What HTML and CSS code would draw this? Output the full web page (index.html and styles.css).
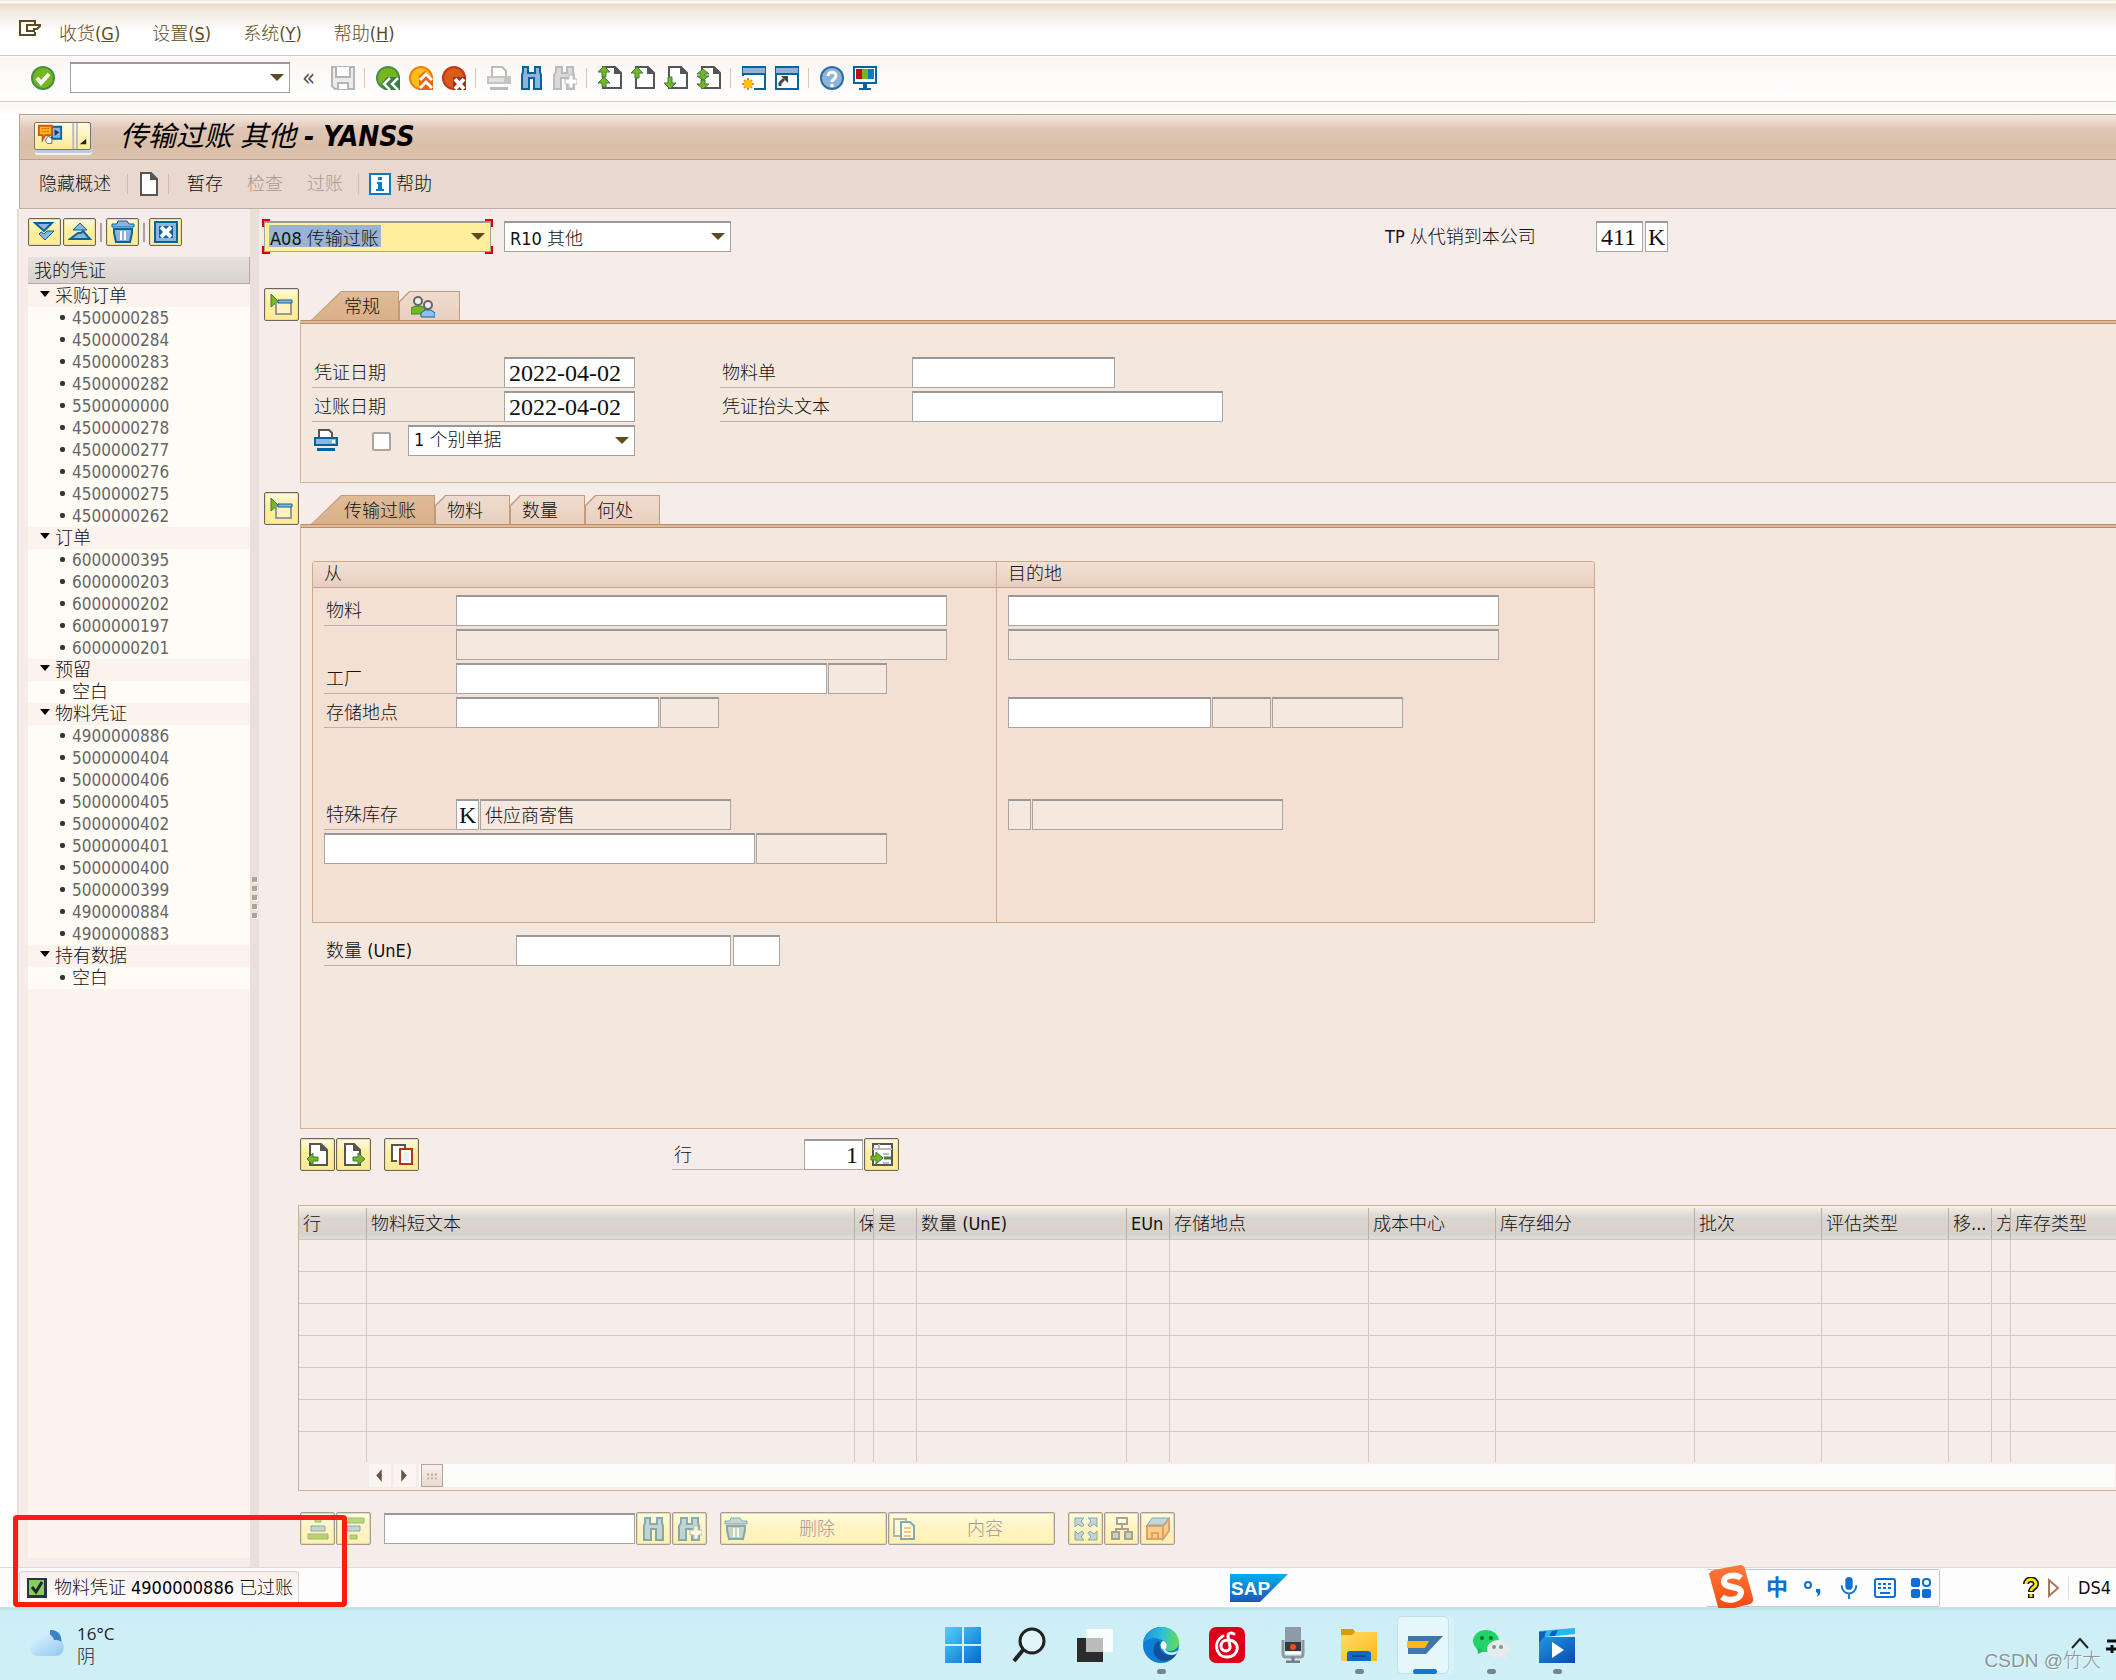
FILE: index.html
```html
<!DOCTYPE html>
<html lang="zh-CN">
<head>
    <meta charset="UTF-8">
    <meta name="viewport" content="width=device-width, initial-scale=1">
    <title>传输过账 其他 - YANSS</title>
    <link rel="stylesheet" href="styles.css">
</head>
<body>
    <!-- icon set -->
    <svg class="defs" aria-hidden="true">
        <defs>
            <linearGradient id="g-sap" x1="0" y1="0" x2="0" y2="1"><stop offset="0" stop-color="#00b0ee"/><stop offset="1" stop-color="#1f56b8"/></linearGradient>
            <linearGradient id="g-win" x1="0" y1="0" x2="1" y2="1"><stop offset="0" stop-color="#4fd0fa"/><stop offset="1" stop-color="#0669cf"/></linearGradient>
            <linearGradient id="g-edge" x1="0" y1="0.3" x2="1" y2="0.4"><stop offset="0" stop-color="#1d8fdc"/><stop offset=".55" stop-color="#2fc0d4"/><stop offset="1" stop-color="#62dd55"/></linearGradient>
            <linearGradient id="g-folder" x1="0" y1="0" x2="1" y2="1"><stop offset="0" stop-color="#ffdd6b"/><stop offset="1" stop-color="#fbb918"/></linearGradient>
            <linearGradient id="g-video" x1="0" y1="0" x2="1" y2="1"><stop offset="0" stop-color="#1d9ae0"/><stop offset="1" stop-color="#0a48b5"/></linearGradient>
            <linearGradient id="g-cloud" x1="0" y1="0" x2="1" y2="1"><stop offset="0" stop-color="#e4f4ff"/><stop offset="1" stop-color="#8cc9f2"/></linearGradient>
            <linearGradient id="g-sogou" x1="0" y1="0" x2="0" y2="1"><stop offset="0" stop-color="#ff7a3c"/><stop offset="1" stop-color="#f2480f"/></linearGradient>
        </defs>
        <symbol id="ok" viewBox="0 0 24 24"><circle cx="12" cy="12" r="11" fill="#76b71f" stroke="#468f46" stroke-width="2"/><path d="M6 12l4 5 8-9" fill="none" stroke="#fff" stroke-width="4"/></symbol>
        <symbol id="save" viewBox="0 0 24 24"><path d="M1 1h22v22H4l-3-3z" fill="#ececec" stroke="#b5b5b5" stroke-width="2"/><path d="M5 1v10h14V1M7 23v-6h10v6" fill="#fff" stroke="#b5b5b5" stroke-width="2"/></symbol>
        <symbol id="back" viewBox="0 0 24 24"><circle cx="12" cy="12" r="11" fill="#76b71f" stroke="#468f46" stroke-width="2"/><path d="M24 11v13H9l-4-6 6-7z" fill="#3c7d46"/><path d="M14 12l-6 6 6 6M22 12l-6 6 6 6" fill="none" stroke="#fff" stroke-width="2.5"/></symbol>
        <symbol id="exit" viewBox="0 0 24 24"><circle cx="12" cy="12" r="11" fill="#fdc010" stroke="#ef7d1a" stroke-width="2"/><path d="M10 24V10l6-5 8 7v12z" fill="#e8641b"/><path d="M11 14l6-6 6 6M11 22l6-6 6 6" fill="none" stroke="#fff" stroke-width="3"/></symbol>
        <symbol id="cancel" viewBox="0 0 24 24"><circle cx="12" cy="12" r="11" fill="#da5a17" stroke="#bb3a1b" stroke-width="2"/><path d="M11 11h13v13H11z" fill="#aa2c1c"/><path d="M13 13l9 10M22 13l-9 10" stroke="#fff" stroke-width="4"/></symbol>
        <symbol id="print-off" viewBox="0 0 24 24"><path d="M5 10V1h10l4 4v5" fill="#fff" stroke="#bbb" stroke-width="2"/><path d="M0 10h24v8H0z" fill="#c4c4c4"/><path d="M2 12h15v4H2z" fill="#e2e2e2"/><path d="M3 21h18v3H3z" fill="#bbb"/></symbol>
        <symbol id="print" viewBox="0 0 24 24"><path d="M5 9V2h10l3 3v4" fill="#fff" stroke="#555" stroke-width="2"/><path d="M0 9h24v9H0z" fill="#06649c"/><path d="M2 11h20v5H2z" fill="#8fb3db"/><path d="M18 12h3v3h-3z" fill="#fff"/><path d="M3 20h18v3H3z" fill="#06649c"/></symbol>
        <symbol id="find" viewBox="0 0 24 24"><path d="M3 1h5v6h7V1h5v5l1 3v14h-7V12H9v11H2V9l1-3z" fill="#8fb3db" stroke="#06649c" stroke-width="2"/></symbol>
        <symbol id="find-off" viewBox="0 0 24 24"><path d="M3 1h6v6h5V1h6v5l1 3v14h-7V12H8v11H1V9l2-3z" fill="#d9d9d9" stroke="#bbb" stroke-width="2"/><path d="M16 9h4v4h4v5h-4v4h-4v-4h-4v-5h4z" fill="#fff" stroke="#bbb"/></symbol>
        <symbol id="find-next" viewBox="0 0 24 24"><path d="M3 1h6v6h5V1h6v5l1 3v14h-7V12H8v11H1V9l2-3z" fill="#8fb3db" stroke="#06649c" stroke-width="2"/><path d="M16 9h4v4h4v5h-4v4h-4v-4h-4v-5h4z" fill="#fff" stroke="#7288aa"/></symbol>
        <symbol id="pg-first" viewBox="0 0 24 24"><path d="M5 1h12l6 6v15H5z" fill="#fff" stroke="#555" stroke-width="2"/><path d="M16 0l8 8h-8z" fill="#555"/><path d="M6 0l6 6H8v5H4V6H0zM6 11l6 6H8v4H4v-4H0z" fill="#76b71f" stroke="#3c7d46"/></symbol>
        <symbol id="pg-up" viewBox="0 0 24 24"><path d="M5 1h12l6 6v15H5z" fill="#fff" stroke="#555" stroke-width="2"/><path d="M16 0l8 8h-8z" fill="#555"/><path d="M6 1l6 6H8v5H4V7H0z" fill="#76b71f" stroke="#3c7d46"/></symbol>
        <symbol id="pg-down" viewBox="0 0 24 24"><path d="M5 1h12l6 6v15H5z" fill="#fff" stroke="#555" stroke-width="2"/><path d="M16 0l8 8h-8z" fill="#555"/><path d="M4 11h4v6h4l-6 6-6-6h4z" fill="#76b71f" stroke="#3c7d46"/></symbol>
        <symbol id="pg-last" viewBox="0 0 24 24"><path d="M5 1h12l6 6v15H5z" fill="#fff" stroke="#555" stroke-width="2"/><path d="M16 0l8 8h-8z" fill="#555"/><path d="M6 3l6 5H8v2h4l-6 4-6-4h4V8H0zM4 14h4v4h4l-6 5-6-5h4z" fill="#76b71f" stroke="#3c7d46"/></symbol>
        <symbol id="session" viewBox="0 0 24 24"><path d="M1 1h22v22H1z" fill="#fff" stroke="#06649c" stroke-width="2"/><path d="M1 2h22v6H1z" fill="#8fb3db"/><path d="M0 8h24" stroke="#06649c" stroke-width="2"/><path d="M0 10h12v14H0z" fill="#fff"/><path d="M6 12v12M0 18h12M2 14l8 8M10 14l-8 8" stroke="#f08c1c" stroke-width="2"/><circle cx="6" cy="18" r="4" fill="#fdc010"/></symbol>
        <symbol id="shortcut" viewBox="0 0 24 24"><path d="M1 1h22v22H1z" fill="#fff" stroke="#06649c" stroke-width="2"/><path d="M1 2h22v6H1z" fill="#8fb3db"/><path d="M0 8h24" stroke="#06649c" stroke-width="2"/><path d="M5 20v-3l4-4" fill="none" stroke="#444" stroke-width="3"/><path d="M6 10h7v7z" fill="#444"/></symbol>
        <symbol id="help" viewBox="0 0 24 24"><circle cx="12" cy="12" r="11" fill="#8fb3db" stroke="#2b6ea5" stroke-width="2"/><path d="M8 10c0-5 8-5 8 0 0 3-4 3-4 6M12 18v3" fill="none" stroke="#fff" stroke-width="3"/></symbol>
        <symbol id="monitor" viewBox="0 0 24 24"><path d="M1 1h22v16H1z" fill="#fff" stroke="#06649c" stroke-width="2"/><path d="M3 3h6v10H3z" fill="#c40d10"/><path d="M9 3h6v10H9z" fill="#76b71f"/><path d="M15 3h6v10h-6z" fill="#0a7cc4"/><path d="M10 17h4v5h4v2H6v-2h4z" fill="#06649c"/></symbol>
        <symbol id="page" viewBox="0 0 18 24"><path d="M1 1h10l6 6v16H1z" fill="#fff" stroke="#555" stroke-width="2"/><path d="M10 0l8 8h-8z" fill="#555"/></symbol>
        <symbol id="info" viewBox="0 0 22 22"><path d="M1 1h20v20H1z" fill="#fff" stroke="#0a7cc4" stroke-width="2"/><path d="M9 4h4v3H9zM8 9h5v7h2v2H7v-2h2v-5H8z" fill="#0a7cc4"/></symbol>
        <symbol id="down2" viewBox="0 0 24 24"><path d="M2 3h17l-8 8z" fill="#8fb3db" stroke="#06649c" stroke-width="2"/><path d="M6 14l6 6 9-9h-7l-3 3-3-2z" fill="#8fb3db" stroke="#06649c"/></symbol>
        <symbol id="up2" viewBox="0 0 24 24"><path d="M12 3l7 7H5z" fill="#8fb3db" stroke="#06649c"/><path d="M2 19l8-6h3l2-2 7 8z" fill="#8fb3db" stroke="#06649c" stroke-width="2"/></symbol>
        <symbol id="trash" viewBox="0 0 24 24"><path d="M7 1h9l2 3h5v3H1V4h5z" fill="#8fb3db" stroke="#06649c"/><path d="M3 9h18v4l-2 9H5L3 13z" fill="#8fb3db" stroke="#06649c" stroke-width="2"/><path d="M10 11v9M14 11v9" stroke="#fff" stroke-width="2"/></symbol>
        <symbol id="close" viewBox="0 0 24 22"><path d="M1 1h22v20H1z" fill="#8fb3db" stroke="#06649c" stroke-width="2"/><path d="M5 5h14v12H5z" fill="#06649c"/><path d="M7 6l10 10M17 6L7 16" stroke="#fff" stroke-width="4"/></symbol>
        <symbol id="expand" viewBox="0 0 24 24"><path d="M1 1v13l7-6z" fill="#76b71f" stroke="#3c7d46"/><path d="M6 9h15v12H6z" fill="#fdf3c0" stroke="#999" stroke-width="2"/><path d="M8 7h14v3H8z" fill="#8fb3db" stroke="#06649c"/></symbol>
        <symbol id="people" viewBox="0 0 24 22"><circle cx="7" cy="5" r="4" fill="#eee" stroke="#666" stroke-width="2"/><path d="M0 18v-6l4-2h6l4 2v6z" fill="#76b71f" stroke="#3c7d46"/><circle cx="17" cy="9" r="4" fill="#eee" stroke="#666" stroke-width="2"/><path d="M10 21v-4l4-3h6l4 3v4z" fill="#8fc0ee" stroke="#06649c"/></symbol>
        <symbol id="doc-prev" viewBox="0 0 24 24"><path d="M4 1h11l6 6v15H4z" fill="#fff" stroke="#555" stroke-width="2"/><path d="M14 0l8 8h-8z" fill="#555"/><path d="M7 10v4h5v4H7v4l-6-6z" fill="#76b71f" stroke="#3c7d46"/></symbol>
        <symbol id="doc-next" viewBox="0 0 24 24"><path d="M3 1h9l6 6v15H3z" fill="#fff" stroke="#555" stroke-width="2"/><path d="M11 0l8 8h-8z" fill="#555"/><path d="M16 10v4h-5v4h5v4l7-6z" fill="#76b71f" stroke="#3c7d46"/></symbol>
        <symbol id="copy" viewBox="0 0 24 24"><path d="M7 18H2V2h13v3" fill="#fff" stroke="#555" stroke-width="2"/><path d="M10 6h12v15H10z" fill="#fff" stroke="#b23418" stroke-width="2"/><path d="M13 9h6v9h-6z" fill="#eee"/></symbol>
        <symbol id="goto" viewBox="0 0 24 24"><path d="M3 1h19v21H3z" fill="#fff" stroke="#555" stroke-width="2"/><path d="M3 6h19M9 1v6M13 11h6M13 20h6" stroke="#bbb" stroke-width="2"/><path d="M14 15h7" stroke="#3c7d46" stroke-width="3"/><path d="M1 13h5v-4l7 6-7 6v-4H1z" fill="#76b71f" stroke="#3c7d46"/></symbol>
        <symbol id="sort-asc" viewBox="0 0 24 24"><path d="M9 1h6v4H9z" fill="#76b71f" stroke="#3c7d46"/><path d="M5 9h14v5H5z" fill="#8fb3db" stroke="#06649c"/><path d="M2 17h20v5H2z" fill="#76b71f" stroke="#3c7d46"/></symbol>
        <symbol id="sort-desc" viewBox="0 0 24 24"><path d="M2 1h20v5H2z" fill="#76b71f" stroke="#3c7d46"/><path d="M5 9h13v5H5z" fill="#8fb3db" stroke="#06649c"/><path d="M8 18h7v4H8z" fill="#76b71f" stroke="#3c7d46"/></symbol>
        <symbol id="content" viewBox="0 0 24 24"><path d="M2 2h12v17H2z" fill="#fff" stroke="#777" stroke-width="2"/><path d="M9 5h9l4 4v13H9z" fill="#fff" stroke="#06649c" stroke-width="2"/><path d="M12 11h7M12 15h7M12 19h7" stroke="#f0a030" stroke-width="2"/></symbol>
        <symbol id="arrows" viewBox="0 0 24 24"><path d="M1 1h9L7 4l3 4-2 2-4-3-3 3zM23 1h-9l3 3-3 4 2 2 4-3 3 3zM1 23h9l-3-3 3-4-2-2-4 3-3-3zM23 23h-9l3-3-3-4 2-2 4 3 3-3z" fill="#8fb3db" stroke="#06649c"/></symbol>
        <symbol id="tree-ic" viewBox="0 0 24 24"><path d="M12 7v5M6 15v-3h12v3" fill="none" stroke="#555" stroke-width="2"/><path d="M7 1h10v6H7z" fill="#fff" stroke="#555" stroke-width="2"/><path d="M2 15h7v7H2zM15 15h7v7h-7z" fill="#8fb3db" stroke="#555" stroke-width="2"/></symbol>
        <symbol id="box" viewBox="0 0 24 24"><path d="M1 9h16v13H1zM17 9l6-7v12l-6 8z" fill="#f9a943" stroke="#c4501c" stroke-width="2"/><path d="M6 1h17l-6 7H1z" fill="#8fb3db" stroke="#06649c"/><path d="M6 22v-6h6v6" fill="none" stroke="#c4501c" stroke-width="2"/></symbol>
    </svg>

    <nav class="menubar">
        <svg class="menu-icon" viewBox="0 0 22 16"><path d="M16 4V1H1v14h15v-3" fill="none" stroke="#5f4b23" stroke-width="2"/><path d="M8 5h14l-4 4h-3v2H8z" fill="#fff" stroke="#5f4b23" stroke-width="2"/></svg>
        <a href="#">收货(<u>G</u>)</a>
        <a href="#">设置(<u>S</u>)</a>
        <a href="#">系统(<u>Y</u>)</a>
        <a href="#">帮助(<u>H</u>)</a>
    </nav>

    <div class="toolbar">
        <button aria-label="确认"><svg><use href="#ok"/></svg></button>
        <span class="select command"><select aria-label="命令"><option></option></select></span>
        <span class="collapse">«</span>
        <button aria-label="保存"><svg><use href="#save"/></svg></button>
        <i class="sep"></i>
        <button aria-label="返回"><svg><use href="#back"/></svg></button>
        <button aria-label="退出"><svg><use href="#exit"/></svg></button>
        <button aria-label="取消"><svg><use href="#cancel"/></svg></button>
        <i class="sep"></i>
        <button aria-label="打印"><svg><use href="#print-off"/></svg></button>
        <button aria-label="查找"><svg><use href="#find"/></svg></button>
        <button aria-label="查找下一个"><svg><use href="#find-off"/></svg></button>
        <i class="sep"></i>
        <button aria-label="第一页"><svg><use href="#pg-first"/></svg></button>
        <button aria-label="上一页"><svg><use href="#pg-up"/></svg></button>
        <button aria-label="下一页"><svg><use href="#pg-down"/></svg></button>
        <button aria-label="最后一页"><svg><use href="#pg-last"/></svg></button>
        <i class="sep"></i>
        <button aria-label="新会话"><svg><use href="#session"/></svg></button>
        <button aria-label="快捷方式"><svg><use href="#shortcut"/></svg></button>
        <i class="sep"></i>
        <button aria-label="帮助"><svg><use href="#help"/></svg></button>
        <button aria-label="布局"><svg><use href="#monitor"/></svg></button>
    </div>

    <div class="window">
        <header class="titlebar">
            <button class="gos" aria-label="对象服务">
                <svg viewBox="0 0 56 28"><path d="M16 4h10v13H16z" fill="#8fb3db" stroke="#06649c" stroke-width="2"/><path d="M19 7l5 3-5 4z" fill="#123f63"/><path d="M2 3h14v10H9l-3 5v-5H2z" fill="#fdb913" stroke="#d8531c" stroke-width="2"/><path d="M5 6h9M5 9h9" stroke="#d8531c" stroke-dasharray="2 1"/><path d="M12 14l4 3v5h-5l-2-3z" fill="#fff" stroke="#666"/><path d="M39 0v28M43 0v28" stroke="#b9b6cf" stroke-width="2"/><path d="M53 17v6h-7z" fill="#222"/></svg>
            </button>
            <h1>传输过账 其他 <b>- YANSS</b></h1>
        </header>

        <div class="appbar">
            <button>隐藏概述</button>
            <i class="sep"></i>
            <button aria-label="新建"><svg class="page"><use href="#page"/></svg></button>
            <i class="sep"></i>
            <button class="cmd">暂存</button>
            <button class="cmd" disabled>检查</button>
            <button class="cmd" disabled>过账</button>
            <i class="sep"></i>
            <button class="with-icon"><svg class="info"><use href="#info"/></svg>帮助</button>
        </div>

        <div class="workspace">
            <aside class="overview">
                <div class="tree-tools">
                    <button class="btn" aria-label="全部展开"><svg><use href="#down2"/></svg></button>
                    <button class="btn" aria-label="全部折叠"><svg><use href="#up2"/></svg></button>
                    <i class="bar"></i>
                    <button class="btn" aria-label="删除"><svg><use href="#trash"/></svg></button>
                    <i class="bar"></i>
                    <button class="btn" aria-label="关闭"><svg><use href="#close"/></svg></button>
                </div>
                <h2>我的凭证</h2>
                <div class="tree">
                    <h3>采购订单</h3>
                    <ul>
                        <li>4500000285</li>
                        <li>4500000284</li>
                        <li>4500000283</li>
                        <li>4500000282</li>
                        <li>5500000000</li>
                        <li>4500000278</li>
                        <li>4500000277</li>
                        <li>4500000276</li>
                        <li>4500000275</li>
                        <li>4500000262</li>
                    </ul>
                    <h3>订单</h3>
                    <ul>
                        <li>6000000395</li>
                        <li>6000000203</li>
                        <li>6000000202</li>
                        <li>6000000197</li>
                        <li>6000000201</li>
                    </ul>
                    <h3>预留</h3>
                    <ul>
                        <li class="empty">空白</li>
                    </ul>
                    <h3>物料凭证</h3>
                    <ul>
                        <li>4900000886</li>
                        <li>5000000404</li>
                        <li>5000000406</li>
                        <li>5000000405</li>
                        <li>5000000402</li>
                        <li>5000000401</li>
                        <li>5000000400</li>
                        <li>5000000399</li>
                        <li>4900000884</li>
                        <li>4900000883</li>
                    </ul>
                    <h3>持有数据</h3>
                    <ul>
                        <li class="empty">空白</li>
                    </ul>
                </div>
            </aside>

            <div class="splitter"><i></i><i></i><i></i><i></i><i></i></div>

            <main class="content">
                <div class="action-row">
                    <span class="select focused"><select aria-label="业务"><option>A08 传输过账</option></select></span>
                    <span class="select"><select aria-label="参考凭证"><option>R10 其他</option></select></span>
                    <label for="mvt">TP 从代销到本公司</label>
                    <input class="field w46" id="mvt" value="411">
                    <input class="field w22" aria-label="特殊库存标识" value="K">
                </div>

                <section class="block">
                    <button class="btn" aria-label="展开抬头"><svg><use href="#expand"/></svg></button>
                    <div class="tabbed">
                        <div class="tabs">
                            <button class="tab active"><span>常规</span></button>
                            <button class="tab" aria-label="合作伙伴"><svg class="people"><use href="#people"/></svg></button>
                        </div>
                        <div class="panel head-panel">
                            <div class="col">
                                <div class="row"><label for="docdate">凭证日期</label><input class="field w131" id="docdate" value="2022-04-02"></div>
                                <div class="row"><label for="pstdate">过账日期</label><input class="field w131" id="pstdate" value="2022-04-02"></div>
                                <div class="row print-row">
                                    <svg class="printer"><use href="#print"/></svg>
                                    <input type="checkbox" aria-label="打印">
                                    <span class="select"><select aria-label="打印方式"><option>1 个别单据</option></select></span>
                                </div>
                            </div>
                            <div>
                                <div class="row"><label for="slip">物料单</label><input class="field w203" id="slip"></div>
                                <div class="row"><label for="headtext">凭证抬头文本</label><input class="field w311" id="headtext"></div>
                            </div>
                        </div>
                    </div>
                </section>

                <section class="block">
                    <button class="btn" aria-label="展开明细"><svg><use href="#expand"/></svg></button>
                    <div class="tabbed">
                        <div class="tabs">
                            <button class="tab active"><span>传输过账</span></button>
                            <button class="tab"><span>物料</span></button>
                            <button class="tab"><span>数量</span></button>
                            <button class="tab"><span>何处</span></button>
                        </div>
                        <div class="panel detail-panel">
                            <div class="transfer">
                                <fieldset class="from">
                                    <h4>从</h4>
                                    <div class="rows">
                                        <div class="row"><label for="mat">物料</label><input class="field w490" id="mat"></div>
                                        <div class="row"><span class="blank"></span><input class="field w490" aria-label="物料描述" readonly></div>
                                        <div class="row"><label for="plant">工厂</label><input class="field w370" id="plant"><input class="field w58" aria-label="工厂代码" readonly></div>
                                        <div class="row"><label for="sloc">存储地点</label><input class="field w203" id="sloc"><input class="field w58" aria-label="存储地点代码" readonly></div>
                                        <div class="row"></div>
                                        <div class="row"></div>
                                        <div class="row"><label for="stock">特殊库存</label><input class="field w22" id="stock" value="K"><input class="field w250 cjk" aria-label="特殊库存描述" value="供应商寄售" readonly></div>
                                        <div class="row"><input class="field w431" aria-label="供应商"><input class="field w130" aria-label="供应商代码" readonly></div>
                                    </div>
                                </fieldset>
                                <fieldset class="dest">
                                    <h4>目的地</h4>
                                    <div class="rows">
                                        <div class="row"><input class="field w490" aria-label="目的物料"></div>
                                        <div class="row"><input class="field w490" aria-label="目的物料描述" readonly></div>
                                        <div class="row"></div>
                                        <div class="row"><input class="field w203" aria-label="目的存储地点"><input class="field w58" aria-label="目的存储地点代码" readonly><input class="field w130" aria-label="目的库存" readonly></div>
                                        <div class="row"></div>
                                        <div class="row"></div>
                                        <div class="row"><input class="field w22" aria-label="目的特殊库存" readonly><input class="field w250" aria-label="目的特殊库存描述" readonly></div>
                                    </div>
                                </fieldset>
                            </div>
                            <div class="row qty-row"><label for="qty">数量 (UnE)</label><input class="field w215" id="qty"><input class="field w46" aria-label="单位"></div>
                        </div>
                    </div>
                </section>

                <div class="button-row">
                    <button class="btn" aria-label="上一项"><svg><use href="#doc-prev"/></svg></button>
                    <button class="btn" aria-label="下一项"><svg><use href="#doc-next"/></svg></button>
                    <button class="btn spaced" aria-label="复制"><svg><use href="#copy"/></svg></button>
                    <div class="row line-row"><label for="line">行</label><input class="field w59" id="line" value="1"></div>
                    <button class="btn" aria-label="转到"><svg><use href="#goto"/></svg></button>
                </div>

                <div class="items">
                    <table>
                        <colgroup>
                            <col class="c68"><col class="c488"><col class="c19"><col class="c43"><col class="c210"><col class="c43"><col class="c199">
                            <col class="c127"><col class="c199"><col class="c127"><col class="c127"><col class="c43"><col class="c19"><col>
                        </colgroup>
                        <thead>
                            <tr><th>行</th><th>物料短文本</th><th>保</th><th>是</th><th>数量 (UnE)</th><th>EUn</th><th>存储地点</th><th>成本中心</th><th>库存细分</th><th>批次</th><th>评估类型</th><th>移...</th><th>方</th><th>库存类型</th></tr>
                        </thead>
                        <tbody>
                            <tr><td></td><td></td><td></td><td></td><td></td><td></td><td></td><td></td><td></td><td></td><td></td><td></td><td></td><td></td></tr>
                            <tr><td></td><td></td><td></td><td></td><td></td><td></td><td></td><td></td><td></td><td></td><td></td><td></td><td></td><td></td></tr>
                            <tr><td></td><td></td><td></td><td></td><td></td><td></td><td></td><td></td><td></td><td></td><td></td><td></td><td></td><td></td></tr>
                            <tr><td></td><td></td><td></td><td></td><td></td><td></td><td></td><td></td><td></td><td></td><td></td><td></td><td></td><td></td></tr>
                            <tr><td></td><td></td><td></td><td></td><td></td><td></td><td></td><td></td><td></td><td></td><td></td><td></td><td></td><td></td></tr>
                            <tr><td></td><td></td><td></td><td></td><td></td><td></td><td></td><td></td><td></td><td></td><td></td><td></td><td></td><td></td></tr>
                            <tr><td></td><td></td><td></td><td></td><td></td><td></td><td></td><td></td><td></td><td></td><td></td><td></td><td></td><td></td></tr>
                        </tbody>
                    </table>
                    <div class="hscroll">
                        <button aria-label="向左"><svg viewBox="0 0 22 22"><path d="M14 4v14l-6-7z" fill="#6b5448"/></svg></button>
                        <button aria-label="向右"><svg viewBox="0 0 22 22"><path d="M8 4v14l6-7z" fill="#6b5448"/></svg></button>
                        <div class="track"><div class="thumb"><svg viewBox="0 0 20 22"><path d="M5 10h10M5 14h10" stroke="#b9a89e" stroke-width="2" stroke-dasharray="2 2"/></svg></div></div>
                    </div>
                </div>

                <div class="button-row">
                    <button class="btn" disabled aria-label="升序"><svg><use href="#sort-asc"/></svg></button>
                    <button class="btn" disabled aria-label="降序"><svg><use href="#sort-desc"/></svg></button>
                    <input class="field search" aria-label="查找">
                    <button class="btn" disabled aria-label="查找"><svg><use href="#find"/></svg></button>
                    <button class="btn" disabled aria-label="继续查找"><svg><use href="#find-next"/></svg></button>
                    <button class="btn long spaced" disabled><svg><use href="#trash"/></svg><span>删除</span></button>
                    <button class="btn long" disabled><svg><use href="#content"/></svg><span>内容</span></button>
                    <button class="btn spaced" disabled aria-label="缩放"><svg><use href="#arrows"/></svg></button>
                    <button class="btn" disabled aria-label="层次"><svg><use href="#tree-ic"/></svg></button>
                    <button class="btn" disabled aria-label="包装"><svg><use href="#box"/></svg></button>
                </div>
            </main>
        </div>
    </div>

    <footer class="statusbar">
        <div class="message">
            <svg viewBox="0 0 20 20"><path d="M0 0h20v20H0z" fill="#2b3340"/><path d="M2 2h15v15H2z" fill="#86cf5e"/><path d="M5 9l4 5 6-10" fill="none" stroke="#1c2b22" stroke-width="3"/></svg>
            物料凭证 <span>4900000886</span> 已过账
        </div>
        <svg class="sap" viewBox="0 0 58 28"><path d="M0 0h58L30 28H0z" fill="url(#g-sap)"/><text x="1" y="21">SAP</text></svg>
        <div class="ime">
            <svg class="sogou" viewBox="0 0 50 46"><path d="M3 9Q4 6 8 5L34 0q4 0 5 4l8 29q1 4-3 6l-27 7q-4 0-5-4z" fill="url(#g-sogou)"/><path d="M35 13c-6-5-18-2-17 4 1 7 18 3 17 11-1 7-13 9-19 4" fill="none" stroke="#fff" stroke-width="6"/></svg>
            <span>中</span>
            <svg viewBox="0 0 22 22"><circle cx="6" cy="8" r="3" fill="none" stroke="#0b6fd6" stroke-width="2"/><path d="M14 12h4c1 4 0 6-3 8 1-3 1-4-1-5z" fill="#0b6fd6"/></svg>
            <svg viewBox="0 0 22 24"><rect x="7" y="0" width="8" height="14" rx="4" fill="#0b6fd6"/><path d="M3 9c0 12 16 12 16 0M11 18v6" fill="none" stroke="#0b6fd6" stroke-width="2"/></svg>
            <svg viewBox="0 0 22 22"><rect x="1" y="2" width="20" height="18" rx="2" fill="none" stroke="#0b6fd6" stroke-width="2"/><path d="M4 7h14M4 11h14" stroke="#0b6fd6" stroke-width="2" stroke-dasharray="3 2"/><path d="M6 16h10" stroke="#0b6fd6" stroke-width="2"/></svg>
            <svg viewBox="0 0 22 22"><rect x="1" y="1" width="9" height="9" rx="2" fill="#0b6fd6"/><rect x="1" y="12" width="9" height="9" rx="2" fill="#0b6fd6"/><rect x="12" y="12" width="9" height="9" rx="2" fill="#0b6fd6"/><rect x="13" y="2" width="7" height="7" rx="3" fill="none" stroke="#0b6fd6" stroke-width="2"/></svg>
        </div>
        <svg class="hint" viewBox="0 0 16 22"><path d="M3 7c0-6 10-6 10 0 0 4-5 3-5 8M8 17v4" fill="none" stroke="#111" stroke-width="6"/><path d="M3 7c0-6 10-6 10 0 0 4-5 3-5 7M8 17v3" fill="none" stroke="#ffe600" stroke-width="3"/></svg>
        <svg class="play" viewBox="0 0 12 20"><path d="M1 2l9 8-9 8z" fill="#fff" stroke="#a8785f" stroke-width="2"/></svg>
        <span class="system">DS4</span>
    </footer>

    <div class="taskbar">
        <div class="weather">
            <svg viewBox="0 0 36 30"><path d="M20 2c8-1 13 6 11 14L20 18z" fill="#3c84c9"/><path d="M8 28a7 7 0 0 1-1-14C8 4 22 3 24 12c8-1 12 5 9 11-1 3-4 5-8 5z" fill="url(#g-cloud)"/></svg>
            <div><p>16°C</p><p class="sky">阴</p></div>
        </div>
        <div class="apps">
            <button aria-label="开始"><svg viewBox="0 0 36 36"><path d="M0 0h17v17H0zM19 0h17v17H19zM0 19h17v17H0zM19 19h17v17H19z" fill="url(#g-win)"/></svg></button>
            <button aria-label="搜索"><svg viewBox="0 0 36 36"><circle cx="21" cy="14" r="12" fill="#e2f5fa" stroke="#222" stroke-width="3"/><path d="M12 23L3 34" stroke="#222" stroke-width="4"/></svg></button>
            <button aria-label="任务视图"><svg viewBox="0 0 36 36"><path d="M0 11h26v24H0z" fill="#2b2b2b"/><path d="M9 2h27v23H9z" fill="#fff" opacity=".85"/><path d="M9 11h17v14H9z" fill="#bbb"/></svg></button>
            <button class="open" aria-label="Edge"><svg viewBox="0 0 36 36"><circle cx="18" cy="18" r="18" fill="#0f7fd6"/><path d="M0 16C2-4 34-6 36 15c0 8-9 11-13 8-2-2 1-3 0-6-2-6-17-9-23-1z" fill="url(#g-edge)"/><path d="M15 14c-9 8-3 21 8 20 5-1 9-4 11-8-10 5-20-1-17-11z" fill="#124f9c"/><path d="M22 23c-5 0-6-7-2-9 4 1 4 5 3 7z" fill="#fff"/><path d="M22 22c3 5 9 4 14 1l-3 4c-5 2-11 1-13-5z" fill="#cfeff6"/></svg></button>
            <button aria-label="网易云音乐"><svg viewBox="0 0 36 36"><rect width="36" height="36" rx="7" fill="#dd001b"/><path d="M14 9C4 14 6 30 18 30c13 0 14-17 1-17-9 0-9 11-2 11 7-1 3-7 2-15 0-3 4-4 6-2" fill="none" stroke="#fff" stroke-width="3" stroke-linecap="round"/></svg></button>
            <button aria-label="录音机"><svg viewBox="0 0 36 36"><path d="M8 13v14q0 3 3 3h14q3 0 3-3V13" fill="none" stroke="#8d98a3" stroke-width="3"/><rect x="10" y="0" width="16" height="16" rx="1" fill="#8e9aa6"/><path d="M10 15h16v9H10z" fill="#39393b"/><circle cx="18" cy="20" r="3" fill="#ee4e13"/><path d="M10 25h16v2H10z" fill="#fff"/><path d="M18 30v5M11 35h14" stroke="#747e88" stroke-width="3"/></svg></button>
            <button class="open" aria-label="文件资源管理器"><svg viewBox="0 0 36 36"><path d="M0 2h12l3 4v6H0z" fill="#dd9a08"/><path d="M0 8h11l3-3h22v29H0z" fill="url(#g-folder)"/><path d="M6 34V27q0-3 3-3h18q3 0 3 3v7z" fill="#0a6cc4"/><path d="M11 29h14" stroke="#07488a" stroke-width="2"/></svg></button>
            <button class="open current" aria-label="SAP Logon"><svg viewBox="0 0 36 36"><path d="M1 9h35L19 27H1z" fill="#3f77ad"/><path d="M0 14h22l-4 7H0z" fill="#fdb913"/></svg></button>
            <button class="open" aria-label="微信"><svg viewBox="0 0 36 36"><ellipse cx="13" cy="14" rx="13" ry="11" fill="#20d566"/><path d="M4 20l1 7 6-3z" fill="#14c55b"/><circle cx="9" cy="11" r="2" fill="#0b6b34"/><circle cx="18" cy="11" r="2" fill="#0b6b34"/><ellipse cx="25" cy="22" rx="11" ry="9" fill="#e8ebeb"/><path d="M33 27v5l-6-2z" fill="#e8ebeb"/><circle cx="21" cy="20" r="2" fill="#8a8f90"/><circle cx="28" cy="20" r="2" fill="#8a8f90"/></svg></button>
            <button class="open" aria-label="视频"><svg viewBox="0 0 36 36"><path d="M0 4l36-3v6L6 10l-3 6H0z" fill="#27b7ef"/><path d="M0 5l7-1-3 12H0zM13 4l6-1-3 6h-6z" fill="#0b5fc0"/><path d="M0 16l5-6h31v26H0z" fill="url(#g-video)"/><path d="M13 15l12 8-12 8z" fill="#fff"/></svg></button>
        </div>
        <div class="tray">
            <svg viewBox="0 0 18 12"><path d="M1 11l8-9 8 9" fill="none" stroke="#222" stroke-width="2"/></svg>
            <svg class="tune" viewBox="0 0 10 16"><path d="M1 4h9M0 12h10M6 8v8" stroke="#111" stroke-width="3"/></svg>
        </div>
    </div>

    <div class="marker"></div>
    <p class="watermark">CSDN @竹大</p>
</body>
</html>
```
FILE: styles.css
```css
* {
    box-sizing: border-box;
}
body {
    margin: 0;
    min-height: 100vh;
    display: flex;
    flex-direction: column;
    position: relative;
    overflow-x: hidden;
    background: #fff;
    color: #111;
    font-family: "DejaVu Sans Condensed", "Noto Sans CJK SC", sans-serif;
    font-size: 18px;
    font-weight: 300;
    line-height: 22px;
}
h1, h2, h3, h4, p, ul, fieldset {
    margin: 0;
    padding: 0;
    border: 0;
    font-weight: inherit;
}
button, input, select {
    font: inherit;
    color: inherit;
    margin: 0;
}
button {
    padding: 0;
    border: 0;
    background: none;
}
svg {
    display: block;
    width: 24px;
    height: 24px;
    flex: none;
}
.defs {
    position: absolute;
    width: 0;
    height: 0;
}

/* menu + standard toolbar */
.menubar {
    height: 56px;
    display: flex;
    gap: 32px;
    padding: 23px 0 0 19px;
    border-bottom: 1px solid #cbc8c5;
    background: linear-gradient(#eddccd 0, #fdf6ef 1px, #fdf6ef 3px, #e9dacb 4px, #f3ebe4 12px, #fff 32px);
}
.menubar a {
    color: #5f4b23;
    text-decoration: none;
}
.menubar .menu-icon {
    width: 22px;
    height: 16px;
    margin: -3px -14px 0 0;
}
.toolbar {
    height: 46px;
    display: flex;
    align-items: center;
    gap: 9px;
    padding: 0 0 2px 31px;
    border-bottom: 1px solid #d2cdc8;
    background: linear-gradient(#fff 0, #fbf6f3 2px, #fff);
}
.toolbar .sep {
    width: 3px;
    height: 20px;
    border-left: 1px solid #e2c4ab;
}
.toolbar .command {
    width: 220px;
    margin: 0 0 0 6px;
}
.collapse {
    width: 23px;
    padding-left: 3px;
    font-size: 24px;
    color: #555;
}

/* drop-downs */
.select {
    position: relative;
    width: 227px;
    height: 31px;
}
.select select {
    display: block;
    width: 100%;
    height: 100%;
    appearance: none;
    padding: 0 5px 2px;
    border: 1px solid #a5a19d;
    border-top: 2px solid #999;
    border-radius: 0;
    background: #fff;
}
.select::after {
    content: "";
    position: absolute;
    right: 6px;
    top: 12px;
    border: 7px solid transparent;
    border-top-color: #5f4b23;
    border-bottom: 0;
    pointer-events: none;
}
.focused select {
    background: linear-gradient(#99b3d3, #99b3d3) 4px 2px / 112px 22px no-repeat, #ffee9b;
}
.focused::before {
    content: "";
    position: absolute;
    inset: -2px;
    z-index: 1;
    pointer-events: none;
    --r: linear-gradient(#e00000, #e00000);
    background:
        var(--r) 0 0 / 8px 2px, var(--r) 0 0 / 2px 8px,
        var(--r) 100% 0 / 8px 2px, var(--r) 100% 0 / 2px 8px,
        var(--r) 0 100% / 8px 2px, var(--r) 0 100% / 2px 8px,
        var(--r) 100% 100% / 8px 2px, var(--r) 100% 100% / 2px 8px;
    background-repeat: no-repeat;
}

/* application window */
.window {
    flex: 1;
    display: flex;
    flex-direction: column;
    padding: 12px 0 0 17px;
    background: linear-gradient(#faf6f0, #fff 14px);
}
.titlebar {
    height: 46px;
    display: flex;
    align-items: center;
    margin-left: 2px;
    padding-left: 14px;
    border: 1px solid #b9a08f;
    border-right: 0;
    background: linear-gradient(#f5e9e0, #dfc6b6 14px, #dabfa8 30px, #dcc3ad);
}
.titlebar h1 {
    padding-left: 29px;
    font-size: 28px;
    line-height: 36px;
    font-style: italic;
    font-weight: 400;
    color: #000;
}
.gos {
    width: 57px;
    height: 28px;
    border: 1px solid #7b7768;
    border-radius: 2px;
    background: linear-gradient(#fffbe0, #ffeb92);
    box-shadow: 1px 3px 0 #b9cbe0, 1px 5px 0 #f3efe9;
}
.titlebar .gos {
    margin-bottom: 3px;
}
.gos svg {
    width: 56px;
    height: 26px;
}
.appbar {
    height: 49px;
    display: flex;
    align-items: center;
    margin-left: 2px;
    padding-left: 19px;
    border: 1px solid #c4aca0;
    border-width: 0 0 1px 1px;
    background: #e8d8cf;
}
.appbar .sep {
    height: 20px;
    margin: 0 12px 0 16px;
    border-left: 1px solid #d6b8a3;
}
.appbar .page {
    width: 18px;
}
.appbar button + .sep:has(+ .cmd) {
    margin: 0 18px 0 10px;
}
.cmd + .cmd {
    margin-left: 24px;
}
.appbar .cmd + .sep {
    margin: 0 10px 0 15px;
}
.appbar .with-icon {
    display: flex;
    align-items: center;
    gap: 5px;
}
.appbar .info {
    width: 22px;
    height: 22px;
}
button:disabled {
    color: #a59a94;
}
.workspace {
    flex: 1;
    display: flex;
    border-left: 2px solid #e6ded8;
    background: #f6edea;
}

/* document overview */
.overview {
    flex: none;
    width: 231px;
    display: flex;
    flex-direction: column;
    padding: 9px 0 9px 9px;
}
.btn {
    flex: none;
    width: 35px;
    height: 33px;
    display: flex;
    align-items: center;
    justify-content: center;
    border: 1px solid #6c695c;
    border-radius: 2px;
    background: linear-gradient(#fffbe2, #ffef9f 40%, #ffeb96);
    box-shadow: inset 0 0 0 1px #efdc92;
}
.tree-tools {
    display: flex;
    align-items: center;
    gap: 2px;
    margin-bottom: 11px;
}
.tree-tools .btn {
    width: 33px;
    height: 28px;
}
.bar {
    width: 2px;
    height: 19px;
    margin: 0 2px;
    background: #aaa29e;
}
.overview h2 {
    height: 27px;
    padding: 3px 6px;
    font-size: 18px;
    background: linear-gradient(#e6e1dd, #d9d3cd);
    border: 1px solid #b5aba4;
    border-width: 0 1px 1px 0;
}
.tree {
    flex: 1;
    padding-top: 1px;
    background: #fcf3ec;
}
.tree h3 {
    position: relative;
    padding-left: 27px;
    font-size: 18px;
}
.tree h3::before {
    content: "";
    position: absolute;
    left: 12px;
    top: 6px;
    border: 5px solid transparent;
    border-top: 6px solid #000;
    border-bottom: 0;
}
.tree ul {
    list-style: none;
    background: #fffbf5;
}
.tree li {
    position: relative;
    height: 22px;
    padding-left: 44px;
    font-size: 17px;
    color: #666;
}
.tree li::before {
    content: "";
    position: absolute;
    left: 32px;
    top: 8px;
    width: 5px;
    height: 5px;
    border-radius: 2px;
    background: #333;
}
.tree .empty {
    font-size: 18px;
    color: #111;
}
.splitter {
    flex: none;
    width: 9px;
    display: flex;
    flex-direction: column;
    align-items: center;
    justify-content: center;
    gap: 4px;
    padding-top: 18px;
    background: #ebdfda;
}
.splitter i {
    width: 5px;
    height: 5px;
    background: #b3a297;
    box-shadow: 1px 1px 0 #fff;
}

/* transaction body */
.content {
    flex: 1;
    min-width: 0;
    padding: 12px 0 22px 5px;
}
.action-row {
    display: flex;
    gap: 2px;
    margin-bottom: 36px;
    line-height: 31px;
}
.action-row .focused {
    margin-right: 11px;
}
.action-row label {
    width: 209px;
    margin-left: 652px;
}
.field {
    height: 31px;
    min-width: 0;
    padding: 0 4px;
    border: 1px solid #a9a5a1;
    border-top: 2px solid #999;
    border-radius: 0;
    outline: 0;
    background: #fff;
    font-family: "Liberation Serif", "Noto Sans CJK SC", serif;
    font-size: 24px;
    font-weight: 400;
}
.field:read-only {
    background: #f4e8df;
}
.field.cjk {
    padding-bottom: 2px;
    font-size: 18px;
    font-weight: 300;
}
.field.w22 {
    width: 23px;
    padding: 0 2px;
}
.w46 { width: 47px; }
.w58 { width: 59px; }
.w59 { width: 59px; text-align: right; }
.w130 { width: 131px; }
.w131 { width: 131px; }
.w203 { width: 203px; }
.w215 { width: 215px; }
.w250 { width: 251px; }
.w311 { width: 311px; }
.w370 { width: 371px; }
.w431 { width: 431px; }
.w490 { width: 491px; }
.block {
    display: flex;
    align-items: flex-start;
    gap: 1px;
    margin-bottom: 9px;
}
.tabbed {
    flex: 1;
    margin-top: 3px;
}
.tabs {
    display: flex;
    padding-left: 11px;
}
.tab {
    --cut: 10px;
    --drop: 10px;
    --fill: linear-gradient(#efdccf, #e8cfbe);
    position: relative;
    width: 75px;
    height: 29px;
    padding: 2px 0 0 12px;
    text-align: left;
    background: #c39b7a;
    clip-path: polygon(var(--cut) 0, 100% 0, 100% 100%, 0 100%, 0 var(--drop));
}
.tab::before {
    content: "";
    position: absolute;
    inset: 1px 1px 0;
    background: var(--fill);
    clip-path: polygon(var(--cut) 0, 100% 0, 100% 100%, 0 100%, 0 var(--drop));
}
.tab.active {
    --cut: 30px;
    --drop: 100%;
    --fill: linear-gradient(#e0bb98, #d9b088);
    width: auto;
    padding: 2px 19px 0 33px;
}
.tab span, .tab svg {
    position: relative;
}
.tab:has(.people) {
    width: 61px;
}
.people {
    height: 22px;
}
.panel {
    border-left: 1px solid #d3b295;
    border-bottom: 1px solid #d3b295;
    background: linear-gradient(#b98c64 1px, #dfbb99 1px, #dfbb99 3px, #b98c64 3px, #b98c64 4px, #f4e8de 4px);
}
.head-panel {
    display: flex;
    padding: 37px 0 23px 11px;
}
.head-panel .col {
    flex: none;
    width: 408px;
}
.row {
    display: flex;
    height: 34px;
}
.row label, .row .blank {
    flex: none;
    width: 192px;
    height: 31px;
    padding: 5px 0 0 2px;
    border-bottom: 1px solid #b9b2ad;
}
.row .blank {
    border-bottom: 0;
}
.print-row .printer {
    width: 24px;
    margin: 3px 34px 0 2px;
}
.print-row input {
    appearance: none;
    width: 19px;
    height: 19px;
    margin: 7px 17px 0 0;
    border: 2px solid #aaa5a0;
    border-radius: 2px;
    background: #fff;
}
.detail-panel {
    min-height: 605px;
    padding: 37px 0 0 11px;
}
.transfer {
    display: flex;
    width: 1283px;
    min-height: 362px;
    border: 1px solid #cfa988;
    border-radius: 3px 3px 0 0;
    background: #f4e0d3;
}
.from {
    width: 684px;
    border-right: 1px solid #cfa988;
}
.dest {
    flex: 1;
}
.transfer h4 {
    height: 26px;
    padding: 1px 11px;
    border-bottom: 1px solid #c9a17e;
    background: linear-gradient(#f1e0d5, #e8cfbe);
}
.rows {
    padding: 7px 11px;
}
.rows .row {
    gap: 1px;
}
.rows label, .rows .blank {
    width: 132px;
    margin-right: -1px;
}
.qty-row {
    gap: 2px;
    margin: 12px 0 0 12px;
}
.qty-row label {
    margin-right: -2px;
}
.button-row {
    display: flex;
    gap: 1px;
    padding-left: 36px;
}
.spaced {
    margin-left: 12px;
}
.line-row {
    height: 33px;
    padding-top: 1px;
    margin-left: 252px;
}
.line-row label {
    width: 132px;
}
.search {
    width: 251px;
    margin: 1px 0 0 12px;
}
.long {
    width: 167px;
    justify-content: flex-start;
    padding-left: 3px;
}
.long span {
    flex: 1;
}
.btn:disabled {
    border-color: #a29f90;
    background: linear-gradient(#fffce8, #fff4c4 40%, #fff1b8);
}
.btn:disabled svg {
    opacity: .5;
}

/* item table */
.items {
    margin: 34px 0 21px 34px;
    padding-top: 2px;
    border: 1px solid #cfb08f;
    border-right: 0;
}
.items table {
    width: 100%;
    table-layout: fixed;
    border-collapse: separate;
    border-spacing: 0;
}
.items th {
    height: 32px;
    padding: 0 0 0 4px;
    overflow: hidden;
    white-space: nowrap;
    text-align: left;
    font-weight: 300;
    border-right: 1px solid #b8b0aa;
    border-bottom: 1px solid #cfc6bf;
    background: linear-gradient(#efebe6, #dcd5cf 10px, #d9d2cb 26px, #e2dcd7);
}
.items td {
    height: 32px;
    padding: 0;
    border-right: 1px solid #d5cac2;
    border-bottom: 1px solid #d5cac2;
}
.items th:last-child, .items td:last-child {
    border-right: 0;
}
.items tbody tr:last-child td {
    height: 30px;
    border-bottom: 0;
}
.c19 { width: 19px; }
.c43 { width: 43px; }
.c68 { width: 68px; }
.c127 { width: 127px; }
.c199 { width: 199px; }
.c210 { width: 210px; }
.c488 { width: 488px; }
.hscroll {
    display: flex;
    gap: 3px;
    padding: 2px 1px 3px 70px;
}
.hscroll button {
    width: 22px;
    height: 23px;
    background: #faf5f2;
}
.hscroll svg {
    width: 20px;
    height: 21px;
}
.track {
    flex: 1;
    background: #fcfcfa;
}
.thumb {
    width: 22px;
    height: 23px;
    margin-left: 2px;
    border: 1px solid #b3a59c;
    background: linear-gradient(#f8f0eb, #ead9cf);
}

/* status bar */
.statusbar {
    height: 41px;
    display: flex;
    align-items: center;
    padding: 0 5px 0 19px;
    border-top: 1px solid #e0d8d3;
    border-bottom: 1px solid #d8dddd;
    background: #fdfdfd;
}
.message {
    width: 280px;
    height: 34px;
    display: flex;
    align-items: center;
    gap: 5px;
    padding-left: 7px;
    border: 1px solid #dfd0c8;
    border-bottom: 0;
    border-radius: 3px 3px 0 0;
    background: linear-gradient(#f7efeb, #fff);
}
.message svg {
    width: 20px;
    height: 20px;
    margin-right: 2px;
}
.message span {
    color: #000;
}
.sap {
    width: 58px;
    height: 28px;
    margin-left: 931px;
}
.sap text {
    font-family: "Liberation Sans", sans-serif;
    font-weight: 700;
    font-size: 19px;
    fill: #fff;
}
.ime {
    height: 38px;
    display: flex;
    align-items: center;
    gap: 14px;
    margin-left: auto;
    padding-right: 7px;
    border: 1px solid #bcc8e2;
    border-left: 0;
    border-radius: 2px;
    color: #0b6fd6;
    font-size: 22px;
    font-weight: 700;
}
.ime svg {
    width: 22px;
    height: 22px;
}
.ime .sogou {
    width: 50px;
    height: 46px;
    margin-right: -4px;
}
.hint {
    width: 16px;
    height: 22px;
    margin: 0 9px 0 83px;
}
.play {
    width: 12px;
    height: 20px;
}
.system {
    margin-left: 8px;
    padding-left: 9px;
    border-left: 1px solid #ddd;
}

/* windows taskbar */
.taskbar {
    height: 72px;
    display: flex;
    background: linear-gradient(#b9dfe8, #cdeef6 3px, #cff0f7);
}
.weather {
    width: 930px;
    display: flex;
    gap: 11px;
    padding: 14px 0 0 30px;
}
.weather svg {
    width: 36px;
    height: 30px;
    margin-top: 6px;
}
.weather p {
    line-height: 23px;
    font-family: "Open Sans", "Noto Sans CJK SC", sans-serif;
    font-size: 17px;
    font-weight: 400;
    color: #222;
}
.weather .sky {
    font-size: 18px;
    font-weight: 300;
}
.apps {
    display: flex;
}
.apps button {
    position: relative;
    width: 66px;
    display: flex;
    justify-content: center;
    padding-top: 19px;
}
.apps svg {
    position: relative;
    width: 36px;
    height: 36px;
}
.apps .open::after {
    content: "";
    position: absolute;
    left: 29px;
    top: 61px;
    width: 9px;
    height: 5px;
    border-radius: 3px;
    background: #74868a;
}
.apps .current::before {
    content: "";
    position: absolute;
    inset: 8px 9px 6px 5px;
    border-radius: 5px;
    border: 1px solid #c0e2ea;
    background: #e6f7fb;
    box-shadow: 5px 0 0 #d9f2f8;
}
.apps .current::after {
    left: 21px;
    width: 24px;
    background: #0b78d4;
}
.tray {
    display: flex;
    gap: 17px;
    margin-left: auto;
    padding-top: 29px;
}
.tray svg {
    width: 18px;
    height: 12px;
}
.tray .tune {
    width: 10px;
    height: 16px;
}
.marker {
    position: absolute;
    left: 13px;
    bottom: 73px;
    width: 334px;
    height: 92px;
    border: 5px solid #ff1c0f;
    border-radius: 4px;
    pointer-events: none;
}
.watermark {
    position: absolute;
    right: 15px;
    bottom: 8px;
    font-family: "Liberation Sans", "Noto Sans CJK SC", sans-serif;
    font-size: 19px;
    color: #8b9699;
    text-shadow: 1px 1px 0 #eafafd;
}
```
